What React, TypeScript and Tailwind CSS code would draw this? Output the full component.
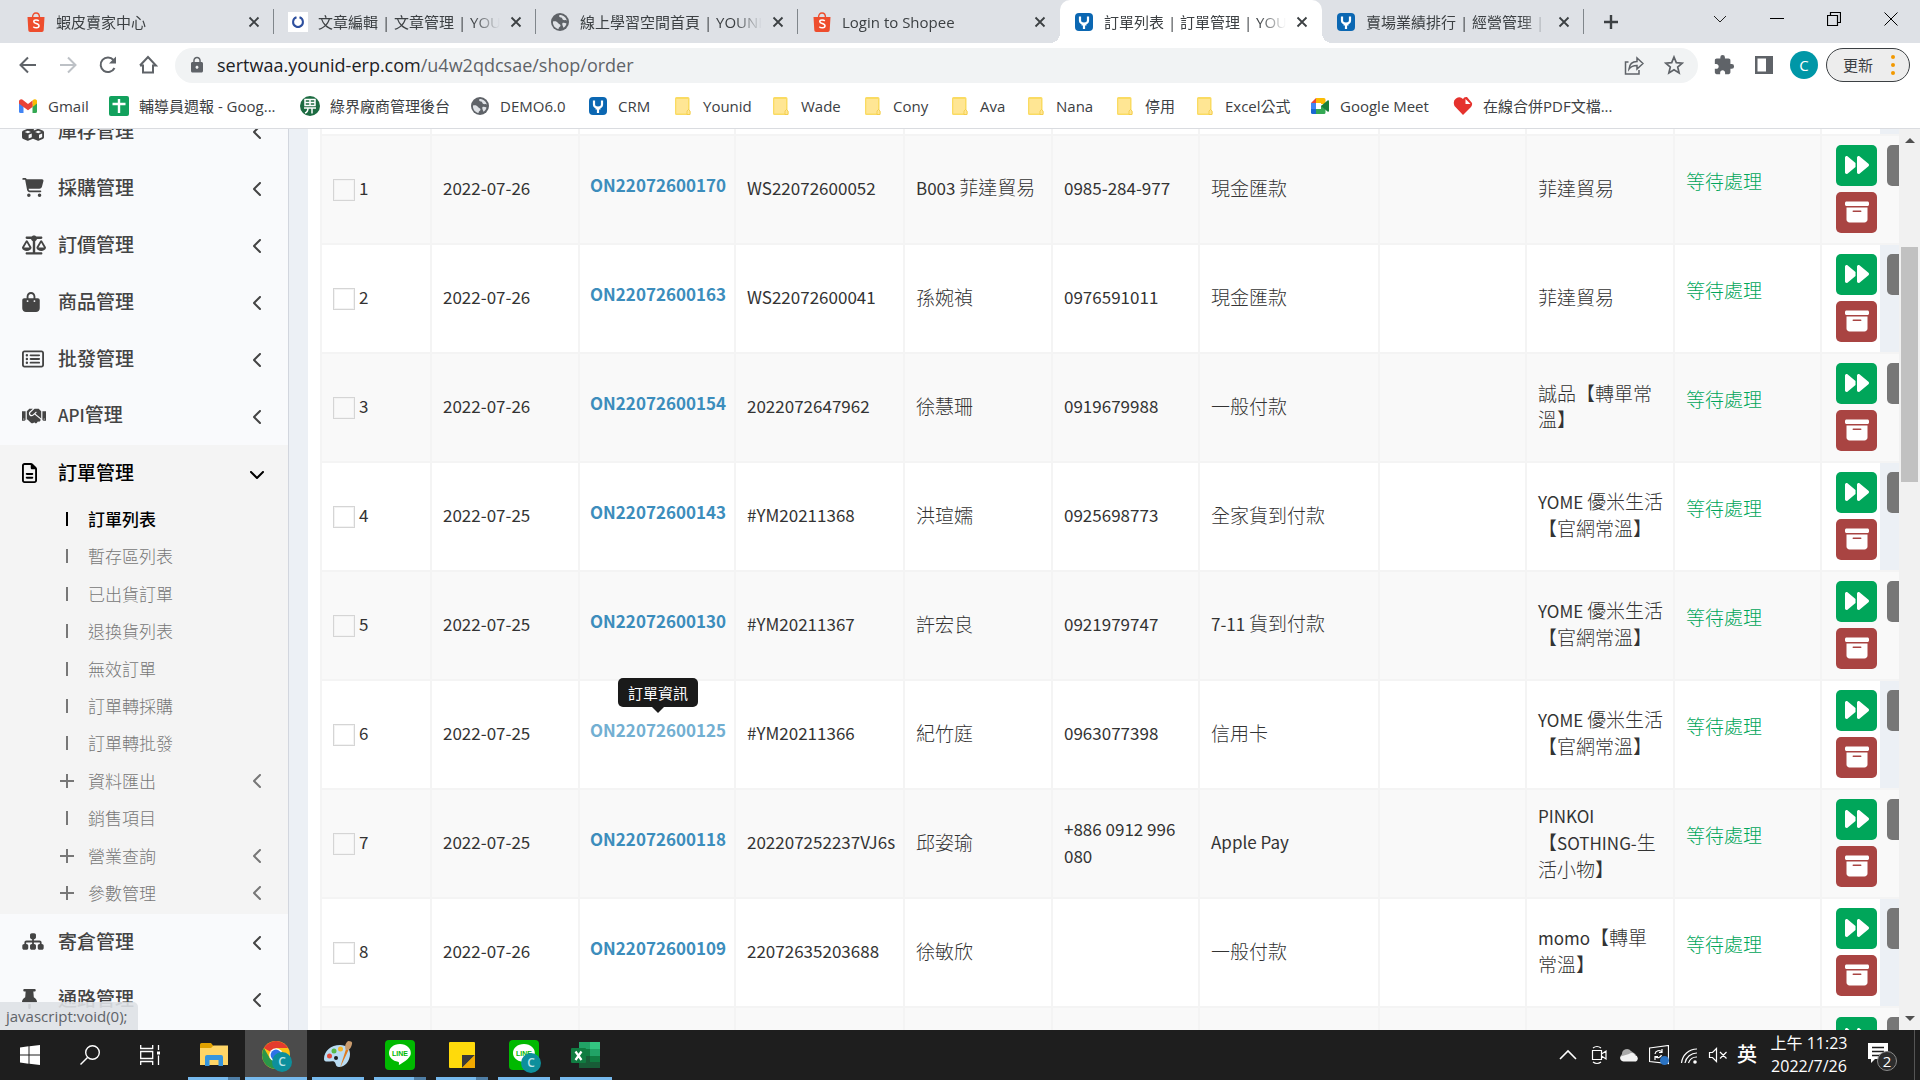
import React from "react";
import {
  FaBagShopping,
  FaBoxArchive,
  FaCartShopping,
  FaChevronDown,
  FaChevronLeft,
  FaCubes,
  FaForward,
  FaRegFileLines,
  FaRegRectangleList,
  FaScaleBalanced,
  FaSitemap,
  FaThumbtack,
} from "react-icons/fa6";
import { FaHandshake } from "react-icons/fa";
import { MdExtension, MdLock } from "react-icons/md";

/* ---------- small drawings ---------- */

const Shopee = () => (
  <svg viewBox="0 0 20 20" className="size-5">
    <path d="M6.500 5.500C6.500 2.500 8 1 10 1s3.500 1.500 3.500 4.500" fill="none" stroke="#ee4d2d" strokeWidth="1.400" />
    <path d="M1.500 5h17l-.8 13.200a1.800 1.800 0 0 1-1.800 1.700H4.100a1.800 1.800 0 0 1-1.800-1.700z" fill="#ee4d2d" />
    <path d="M12.800 8.900c-1-.9-5-1.500-5 .8 0 2.200 5.200 1.400 5.200 4 0 2.700-4.200 2.400-5.700 1" fill="none" stroke="#fff" strokeWidth="1.500" />
  </svg>
);

const RingIcon = () => (
  <svg viewBox="0 0 20 20" className="size-5">
    <rect width="20" height="20" fill="#fff" />
    <path d="M8.500 5.200a5 5 0 0 0-.5 9.300M11.500 5.200a5 5 0 0 1 .5 9.300M8 14.500q2 1 4 0" fill="none" stroke="#2d4f9e" strokeWidth="2" />
  </svg>
);

const GlobeIcon = () => (
  <svg viewBox="0 0 20 20" className="size-5">
    <circle cx="10" cy="10" r="9" fill="#5f6368" />
    <path d="M3 9.500c2.500-.5 4 0 5 1.500s2.500 1 2.500 2.500-2 1.500-2 3.500c-3.500-.5-6-4-5.500-7.500zM9.500 3c-1 1.500 0 2.500 1.500 2.500s1 2 2.500 2.500 2.500-.5 3.300.8C16.300 5.500 13.500 3 9.500 3zM12.500 11c1.500-.5 3 .3 4 .5-.5 2-1.500 3.500-3 4.300-.5-1.500-1.800-3.800-1-4.800z" fill="#dfe2e6" />
  </svg>
);

const YounidIcon = () => (
  <svg viewBox="0 0 20 20" className="size-5">
    <rect x="1" y="1" width="18" height="18" rx="4" fill="#0b67b2" />
    <path d="M6 4.500v4q0 3 4 3t4-3v-4M10 11v6M7.500 12.500h5" fill="none" stroke="#fff" strokeWidth="2.200" />
  </svg>
);

const GmailIcon = () => (
  <svg viewBox="0 0 20 20" className="size-5">
    <path d="M1 5v10.500q0 1.500 1.500 1.500H5.500V8z" fill="#4285f4" />
    <path d="M19 5v10.500q0 1.500-1.500 1.500h-3V8z" fill="#34a853" />
    <path d="M14.500 8V4.500l1.200-.9Q17.500 2.600 19 4.500V7.500L14.500 11z" fill="#fbbc04" />
    <path d="M1 4.800Q2.200 2.600 4.300 3.600L10 8l4.500-3.500V11L10 14.300 5.500 11 1 7.500z" fill="#ea4335" />
  </svg>
);

const SheetIcon = () => (
  <svg viewBox="0 0 20 20" className="size-5">
    <rect width="20" height="20" rx="2" fill="#12a15d" />
    <path d="M10 3v14M3.500 8h13" stroke="#fff" strokeWidth="2.400" />
  </svg>
);

const EcpayIcon = () => (
  <svg viewBox="0 0 20 20" className="size-5">
    <circle cx="10" cy="10" r="10" fill="#1c6b41" />
    <path d="M5 3.500h10v6H5zM5 6.500h10M10 3.500v6M4 12h12M8 12q0 4-3 5M12 12v5.500" fill="none" stroke="#fff" strokeWidth="1.500" />
  </svg>
);

const FolderIcon = () => (
  <svg viewBox="0 0 20 20" className="size-5">
    <path d="M2 2.500Q2 1 3.500 1H15q1.500 0 1.500 1.500V14l1 1.500v2q0 1.500-1.500 1.500H3.500Q2 19 2 17.500z" fill="#fadb62" />
    <path d="M3.300 3H15v14.500H3.300z" fill="#ffe694" />
    <path d="M14 18.500v-3.500l1.500-1.500 1.500 1.500v3.500z" fill="#ffe694" stroke="#f0c53a" strokeWidth=".7" />
  </svg>
);

const MeetIcon = () => (
  <svg viewBox="0 0 20 20" className="size-5">
    <path d="M1 7l5-5v5z" fill="#ea4335" />
    <path d="M6 2h8q1.500 0 1.500 1.500V8H11V7H6z" fill="#fbbc04" />
    <path d="M1 7h5v6.500H1z" fill="#4285f4" />
    <path d="M1 13h5v5H2.500Q1 18 1 16.500z" fill="#1967d2" />
    <path d="M6 13h5v-3l4.500-2v8.500q0 1.500-1.500 1.500H6z" fill="#34a853" />
    <path d="M11 10l6.500-5.500q1.500-.8 1.500 1v9q0 1.800-1.500 1z" fill="#188038" />
  </svg>
);

const PdfHeart = () => (
  <svg viewBox="0 0 20 20" className="size-5">
    <path d="M10 19L1.500 10Q-.5 5 3 2.500 7-.2 10 3q1-2.500 4-2l5 6q.5 2-1 4z" fill="#e5322d" />
    <path d="M12.500 3l5 5h-5z" fill="#fff" />
  </svg>
);

const CloseX = () => (
  <svg viewBox="0 0 12 12" className="size-3">
    <path d="M1.500 1.500l9 9M10.500 1.500l-9 9" stroke="#3c4043" strokeWidth="1.800" />
  </svg>
);

/* ---------- browser chrome ---------- */

const tabs = [
  { icon: <Shopee />, title: "蝦皮賣家中心", sep: true },
  { icon: <RingIcon />, title: "文章編輯 | 文章管理 | YOUNID", sep: true },
  { icon: <GlobeIcon />, title: "線上學習空間首頁 | YOUNID", sep: true },
  { icon: <Shopee />, title: "Login to Shopee", sep: false },
  { icon: <YounidIcon />, title: "訂單列表 | 訂單管理 | YOUNID", sep: false, active: true },
  { icon: <YounidIcon />, title: "賣場業績排行 | 經營管理 | YOUNID", sep: true },
];

function TabStrip() {
  return (
    <div className="flex h-[43px] shrink-0 bg-[#dee1e6] pl-3">
      {tabs.map((t, i) => (
        <div
          key={i}
          className={
            t.active
              ? "relative flex w-[262px] items-center rounded-t-[10px] bg-white pr-2 pl-[14px]"
              : "relative flex w-[262px] items-center pr-2 pl-[14px]"
          }
        >
          {t.active && (
            <>
              <span className="absolute bottom-0 -left-2.5 size-2.5 bg-[radial-gradient(circle_at_0_0,transparent_10px,white_10px)]" />
              <span className="absolute -right-2.5 bottom-0 size-2.5 bg-[radial-gradient(circle_at_100%_0,transparent_10px,white_10px)]" />
            </>
          )}
          {t.icon}
          <span className="mr-1 ml-2.5 flex-1 overflow-hidden text-[15px] leading-6 whitespace-nowrap text-[#3c4043] [mask-image:linear-gradient(to_right,#000_85%,transparent)]">
            {t.title}
          </span>
          <button aria-label="關閉分頁" className="flex size-6 items-center justify-center">
            <CloseX />
          </button>
          {t.sep && <span className="absolute top-[9px] right-0 h-[25px] w-px bg-[#80868b]" />}
        </div>
      ))}
      <button aria-label="新分頁" className="flex w-[54px] items-center justify-center">
        <svg viewBox="0 0 16 16" className="size-4">
          <path d="M8 1v14M1 8h14" stroke="#3c4043" strokeWidth="2.400" />
        </svg>
      </button>
      <div className="mr-px ml-auto flex h-[37px]">
        <button aria-label="搜尋分頁" className="flex w-[57px] items-center justify-center">
          <svg viewBox="0 0 14 14" className="size-3.5">
            <path d="M1 4l6 6 6-6" fill="none" stroke="#222" />
          </svg>
        </button>
        <button aria-label="最小化" className="flex w-[57px] items-center justify-center">
          <span className="h-px w-3.5 bg-black" />
        </button>
        <button aria-label="還原" className="flex w-[57px] items-center justify-center">
          <svg viewBox="0 0 14 14" className="size-3.5">
            <path d="M.5 3.500h10v10H.5zM3.500 3V.5h10v10H11" fill="none" stroke="#000" strokeWidth="1.200" />
          </svg>
        </button>
        <button aria-label="關閉" className="flex w-[57px] items-center justify-center">
          <svg viewBox="0 0 14 14" className="size-3.5">
            <path d="M.5.5l13 13M13.500.5l-13 13" stroke="#000" />
          </svg>
        </button>
      </div>
    </div>
  );
}

function NavIcon({ label, children }: { label: string; children: React.ReactNode }) {
  return (
    <button aria-label={label} className="flex h-8 w-10 items-center justify-center">
      <svg viewBox="0 0 20 20" className="size-5" fill="none" stroke="#5f6368" strokeWidth="2">
        {children}
      </svg>
    </button>
  );
}

function Toolbar() {
  return (
    <div className="flex h-[45px] shrink-0 items-center bg-white pr-2.5 pb-px pl-2">
      <NavIcon label="上一頁">
        <path d="M18 10H3M10 2.500L2.500 10l7.500 7.500" />
      </NavIcon>
      <NavIcon label="下一頁">
        <path d="M2 10h15M10 2.500l7.500 7.500-7.500 7.500" stroke="#bdc1c6" />
      </NavIcon>
      <NavIcon label="重新載入">
        <path d="M16.500 13A7.300 7.300 0 1 1 15.500 5" />
        <path d="M18 1.500V8.500h-7z" fill="#5f6368" stroke="none" />
      </NavIcon>
      <NavIcon label="首頁">
        <path d="M5 9.500V17.500h10V9.500M2 10.500l8-8.500 8 8.500H14.500M2 10.500h3.500" />
      </NavIcon>
      <div className="ml-[7px] flex h-[35px] flex-1 items-center rounded-full bg-[#f1f3f4] pr-3 pl-[13px]">
        <MdLock className="size-[18px] text-[#5f6368]" />
        <label htmlFor="url" className="sr-only">
          網址
        </label>
        <div className="relative ml-[11px] flex-1">
          <input id="url" readOnly value="sertwaa.younid-erp.com/u4w2qdcsae/shop/order" className="w-full bg-transparent text-[18px] leading-7 text-transparent outline-none" />
          <span aria-hidden="true" className="pointer-events-none absolute inset-0 text-[18px] leading-7 text-[#5f6368]">
            <span className="text-[#202124]">sertwaa.younid-erp.com</span>/u4w2qdcsae/shop/order
          </span>
        </div>
        <button aria-label="分享" className="mr-2 flex w-10 justify-center">
          <svg viewBox="0 0 20 20" className="size-5" fill="none" stroke="#5f6368" strokeWidth="1.500">
            <path d="M4.500 7H1.500v12H15v-4M5 14c.5-5 3.500-7.500 8-7.500V3l6 5.500-6 5.500v-3.500c-3.500 0-6 .8-8 3.500z" />
          </svg>
        </button>
        <button aria-label="加入書籤" className="flex w-6 justify-center">
          <svg viewBox="0 0 20 20" className="size-5" fill="none" stroke="#5f6368" strokeWidth="1.700">
            <path d="M10 2l2.300 5.600 6 .5-4.600 3.900 1.400 5.900L10 14.700l-5.100 3.200 1.400-5.900L1.700 8.100l6-.5z" />
          </svg>
        </button>
      </div>
      <button aria-label="擴充功能" className="ml-1.5 flex w-10 justify-center">
        <MdExtension className="size-[22px] text-[#5f6368]" />
      </button>
      <button aria-label="側邊面板" className="flex w-10 justify-center">
        <svg viewBox="0 0 20 20" className="size-5">
          <path d="M1 1h18v18H1zM3.500 3.500v13H12v-13z" fill="#5f6368" fillRule="evenodd" />
        </svg>
      </button>
      <button className="ml-1.5 size-7 rounded-full bg-[#0097a7] text-[15px] text-white">C</button>
      <button className="ml-2 flex h-[34px] w-[84px] items-center rounded-full border border-[#3c4043] bg-[#ededed] pl-4 text-[15px] text-[#3c4043]">
        更新
        <span className="ml-[18px] flex flex-col gap-1">
          <span className="size-1 rounded-full bg-[#f29900]" />
          <span className="size-1 rounded-full bg-[#f29900]" />
          <span className="size-1 rounded-full bg-[#f29900]" />
        </span>
      </button>
    </div>
  );
}

const bookmarks = [
  { icon: <GmailIcon />, label: "Gmail", w: "w-[91px]" },
  { icon: <SheetIcon />, label: "輔導員週報 - Goog...", w: "w-[191px]" },
  { icon: <EcpayIcon />, label: "綠界廠商管理後台", w: "w-[170px]" },
  { icon: <GlobeIcon />, label: "DEMO6.0", w: "w-[118px]" },
  { icon: <YounidIcon />, label: "CRM", w: "w-[85px]" },
  { icon: <FolderIcon />, label: "Younid", w: "w-[98px]" },
  { icon: <FolderIcon />, label: "Wade", w: "w-[92px]" },
  { icon: <FolderIcon />, label: "Cony", w: "w-[87px]" },
  { icon: <FolderIcon />, label: "Ava", w: "w-[76px]" },
  { icon: <FolderIcon />, label: "Nana", w: "w-[89px]" },
  { icon: <FolderIcon />, label: "停用", w: "w-[80px]" },
  { icon: <FolderIcon />, label: "Excel公式", w: "w-[115px]" },
  { icon: <MeetIcon />, label: "Google Meet", w: "w-[143px]" },
  { icon: <PdfHeart />, label: "在線合併PDF文檔...", w: "w-[170px]" },
];

function Bookmarks() {
  return (
    <div className="flex h-[41px] shrink-0 items-center border-b border-[#dadce0] bg-white pb-1 pl-[18px]">
      {bookmarks.map((b) => (
        <div key={b.label} className={b.w}>
          <a href="#" className="flex items-center gap-2.5 text-[15px] leading-6 whitespace-nowrap text-[#3c4043]">
            {b.icon}
            <span>{b.label}</span>
          </a>
        </div>
      ))}
    </div>
  );
}

/* ---------- sidebar ---------- */

/* Latin runs are set one step smaller and heavier than the Chinese ones so both read as one size. */
function Mixed({ text, latin = "text-[17px] font-normal" }: { text: string; latin?: string }) {
  return (
    <>
      {text.split(/([\x20-\x7e]+)/).map((part, i) =>
        /^[\x20-\x7e]+$/.test(part) ? (
          <span key={i} className={latin}>
            {part}
          </span>
        ) : (
          part
        ),
      )}
    </>
  );
}

const subItems = [
  { label: "訂單列表", active: true },
  { label: "暫存區列表" },
  { label: "已出貨訂單" },
  { label: "退換貨列表" },
  { label: "無效訂單" },
  { label: "訂單轉採購" },
  { label: "訂單轉批發" },
  { label: "資料匯出", more: true },
  { label: "銷售項目" },
  { label: "營業查詢", more: true },
  { label: "參數管理", more: true },
];

function MenuItem({ icon, label, open }: { icon: React.ReactNode; label: string; open?: boolean }) {
  return (
    <a
      href="#"
      className={
        open
          ? "flex h-[57px] items-center pr-[23px] pl-[22px] text-[19px] font-medium text-black"
          : "flex h-[57px] items-center pr-[25px] pl-[22px] text-[19px] font-medium text-[#444]"
      }
    >
      <span className="w-9 pb-0.5">{icon}</span>
      <span className="flex-1 pb-1 leading-7">
        <Mixed text={label} latin="text-[17px]" />
      </span>
      {open ? <FaChevronDown className="size-4" /> : <FaChevronLeft className="h-4 w-2.5" />}
    </a>
  );
}

function Sidebar() {
  return (
    <aside className="w-[289px] shrink-0 overflow-hidden border-r border-[#d2d6de] bg-[#f9fafc]">
      <nav className="-mt-[26px]">
        <MenuItem icon={<FaCubes className="size-[22px]" />} label="庫存管理" />
        <MenuItem icon={<FaCartShopping className="h-[19px] w-[22px]" />} label="採購管理" />
        <MenuItem icon={<FaScaleBalanced className="h-5 w-6" />} label="訂價管理" />
        <MenuItem icon={<FaBagShopping className="h-5 w-[18px]" />} label="商品管理" />
        <MenuItem icon={<FaRegRectangleList className="size-[22px]" />} label="批發管理" />
        <MenuItem icon={<FaHandshake className="size-6" />} label="API管理" />
        <div className="bg-[#f4f4f4]">
          <MenuItem open icon={<FaRegFileLines className="h-5 w-[15px]" />} label="訂單管理" />
          <ul className="grid h-[412px] auto-rows-fr">
            {subItems.map((s) => (
              <li key={s.label} className="flex items-center pb-1">
                <a
                  href="#"
                  className={
                    s.active
                      ? "flex flex-1 items-center pr-[25px] pl-[60px] text-[17px] font-medium text-black"
                      : "flex flex-1 items-center pr-[25px] pl-[60px] text-[17px] font-light text-[#777]"
                  }
                >
                  <svg viewBox="0 0 14 14" className="mr-3.5 size-3.5" stroke="currentColor" strokeWidth="2" fill="none">
                    <path d={s.more ? "M7 0v14M0 7h14" : "M7 0v14"} />
                  </svg>
                  <span className="flex-1 leading-7">{s.label}</span>
                  {s.more && <FaChevronLeft className="h-4 w-2.5" />}
                </a>
              </li>
            ))}
          </ul>
        </div>
        <MenuItem icon={<FaSitemap className="h-[19px] w-[22px]" />} label="寄倉管理" />
        <MenuItem icon={<FaThumbtack className="h-5 w-[15px]" />} label="通路管理" />
      </nav>
    </aside>
  );
}

/* ---------- order table ---------- */

const orders = [
  ["2022-07-26", "ON22072600170", "WS22072600052", "B003 菲達貿易", "0985-284-977", "現金匯款", "菲達貿易"],
  ["2022-07-26", "ON22072600163", "WS22072600041", "孫婉禎", "0976591011", "現金匯款", "菲達貿易"],
  ["2022-07-26", "ON22072600154", "2022072647962", "徐慧珊", "0919679988", "一般付款", "誠品【轉單常溫】"],
  ["2022-07-25", "ON22072600143", "#YM20211368", "洪瑄嬬", "0925698773", "全家貨到付款", "YOME 優米生活【官網常溫】"],
  ["2022-07-25", "ON22072600130", "#YM20211367", "許宏良", "0921979747", "7-11 貨到付款", "YOME 優米生活【官網常溫】"],
  ["2022-07-25", "ON22072600125", "#YM20211366", "紀竹庭", "0963077398", "信用卡", "YOME 優米生活【官網常溫】"],
  ["2022-07-25", "ON22072600118", "202207252237VJ6s", "邱姿瑜", "+886 0912 996 080", "Apple Pay", "PINKOI【SOTHING-生活小物】"],
  ["2022-07-26", "ON22072600109", "22072635203688", "徐敏欣", "", "一般付款", "momo【轉單常溫】"],
  ["2022-07-26", "ON22072600092", "22072635203671", "", "", "", ""],
];

const cell = "border-t-2 border-l-2 border-[#f4f4f4] pt-0 pr-[9px] pb-1 pl-[11px] align-middle leading-[26px]";

function OrderRow({ data, n }: { data: string[]; n: number }) {
  const [date, no, ext, name, phone, pay, shop] = data;
  const hovered = n === 6;
  return (
    <tr className={n % 2 ? "h-[109px] bg-[#f9f9f9]" : "h-[109px]"}>
      <td className={cell}>
        <label className="flex items-center gap-1 text-[17px] font-normal">
          <input type="checkbox" className="mt-1 size-[22px] appearance-none border border-[#d5d5d5] shadow-[inset_0_0_0_1px_#f3f3f3]" />
          {n}
        </label>
      </td>
      <td className={cell}>
        <Mixed text={date} />
      </td>
      <td className="border-t-2 border-l-2 border-[#f4f4f4] pb-1 pl-2.5 align-middle leading-[26px]">
        <div className="relative w-max pb-1.5 text-[17px] whitespace-nowrap">
          <a href="#" className={hovered ? "font-bold text-[#72afd2]" : "font-bold text-[#3c8dbc]"}>
            {no}
          </a>
          {hovered && (
            <div role="tooltip" className="absolute bottom-full left-1/2 mb-2.5 -translate-x-1/2 rounded-[5px] bg-[#1a1a1a] px-2.5 text-[15px] leading-[29px] font-normal text-white">
              訂單資訊
              <span className="absolute top-full left-1/2 -ml-1.5 border-x-6 border-t-6 border-x-transparent border-t-[#1a1a1a]" />
            </div>
          )}
        </div>
      </td>
      <td className={cell}>
        <Mixed text={ext} />
      </td>
      <td className={cell}>
        <Mixed text={name} />
      </td>
      <td className={cell}>
        <Mixed text={phone} />
      </td>
      <td className={cell}>
        <Mixed text={pay} />
      </td>
      <td className={cell} />
      <td className={cell}>
        <Mixed text={shop} />
      </td>
      <td className={cell}>
        <div className="pb-3.5 text-[#00a65a]">等待處理</div>
      </td>
      <td className="border-t-2 border-l-2 border-[#f4f4f4] pb-0.5 pl-[14px]">
        <div className="grid w-max grid-cols-2 gap-x-2.5 gap-y-1.5">
          <button aria-label="下一步" className="flex size-[41px] items-center justify-center rounded-[5px] bg-[#00a65a] text-white">
            <FaForward className="size-6" />
          </button>
          <button aria-label="更多" className="size-[41px] rounded-[5px] bg-[#777]" />
          <button aria-label="封存" className="flex size-[41px] items-center justify-center rounded-[5px] bg-[#a94442] text-white">
            <FaBoxArchive className="size-6" />
          </button>
        </div>
      </td>
    </tr>
  );
}

function OrderTable() {
  return (
    <main className="flex-1 overflow-hidden bg-[#ecf0f5] pr-[19px] pl-[19px]">
      <div className="h-full bg-white px-3">
        <table className="w-[calc(100%+62px)] table-fixed border-separate border-spacing-0 text-[19px] font-light text-[#333]">
          <colgroup>
            <col className="w-[110px]" />
            <col className="w-[148px]" />
            <col className="w-[156px]" />
            <col className="w-[169px]" />
            <col className="w-[148px]" />
            <col className="w-[147px]" />
            <col />
            <col className="w-[147px]" />
            <col className="w-[148px]" />
            <col className="w-[147px]" />
            <col className="w-[110px]" />
          </colgroup>
          <thead>
            <tr className="h-[5px]">
              {Array.from({ length: 11 }, (_, i) => (
                <td key={i} className="border-l-2 border-[#f4f4f4] p-0" />
              ))}
            </tr>
          </thead>
          <tbody>
            {orders.map((o, i) => (
              <OrderRow key={o[1]} data={o} n={i + 1} />
            ))}
          </tbody>
        </table>
      </div>
    </main>
  );
}

function ScrollBar() {
  return (
    <div className="flex w-[21px] shrink-0 flex-col items-center bg-[#f1f1f1] py-[9px]">
      <span className="border-x-5 border-b-5 border-x-transparent border-b-[#505050]" />
      <span className="mt-[104px] h-[235px] w-[17px] bg-[#c1c1c1]" />
      <span className="mt-auto border-x-5 border-t-5 border-x-transparent border-t-[#505050]" />
    </div>
  );
}

/* ---------- taskbar ---------- */

const LineLogo = () => (
  <svg viewBox="0 0 30 30" className="size-[30px]">
    <rect width="30" height="30" rx="4" fill="#00b900" />
    <path d="M15 4C8.400 4 4 8 4 13c0 4.500 3.800 8 9 8.800 1.500.3 1 1.500.8 3.200 4-2 11.200-6.500 12-11C26.500 8.500 21.600 4 15 4z" fill="#fff" />
    <text x="15" y="16" textAnchor="middle" fontSize="7" fontWeight="bold" fill="#00b900" fontFamily="Liberation Sans">
      LINE
    </text>
  </svg>
);

const Badge = () => (
  <span className="absolute -right-0.5 -bottom-[3px] size-5 rounded-full bg-[#0d8f9c] text-center text-xs leading-5 font-semibold text-[#b9e4e8]">C</span>
);

const ChromeLogo = () => (
  <svg viewBox="0 0 28 28" className="size-7">
    <circle cx="14" cy="14" r="14" fill="#fbc116" />
    <path d="M14 14L1.900 7A14 14 0 0 1 26.100 7H14z" fill="#e33b2e" />
    <path d="M1.900 7A14 14 0 0 0 14 28l6-10.500L14 14l-6 3.500z" fill="#2a9649" />
    <circle cx="14" cy="14" r="6.800" fill="#fff" />
    <circle cx="14" cy="14" r="5.400" fill="#2f72e8" />
  </svg>
);

const ExplorerLogo = () => (
  <svg viewBox="0 0 28 24" className="h-6 w-7">
    <path d="M0 1.500Q0 0 1.500 0H11l2.500 3H28v19H0z" fill="#e0a100" />
    <path d="M0 5h11l2.500-2.500H28V22H0z" fill="#ffd566" />
    <path d="M5 14q0-2 2-2h14q2 0 2 2v9h-4.500v-6h-9v6H5z" fill="#3695dd" />
  </svg>
);

const PaintLogo = () => (
  <svg viewBox="0 0 30 28" className="h-7 w-[30px]">
    <path d="M1 18C1 10 8 4 17 4c7 0 10 4 10 9 0 7-5 13-11 13-4 0-2.500-4-5-5.500S1 23 1 18z" fill="#b9dcf3" />
    <circle cx="6.500" cy="15" r="2.500" fill="#e24a3b" />
    <circle cx="11" cy="10" r="2.500" fill="#58b947" />
    <circle cx="17.500" cy="8" r="2.500" fill="#f4b62e" />
    <circle cx="13" cy="17" r="2" fill="#1e1e1e" />
    <path d="M17 27l6-19 2.500 1z" fill="#e07b1f" />
    <path d="M22.500 8.500Q21 3 25 0q5 0 4 3-1 5-4 6z" fill="#c99b6d" />
  </svg>
);

const StickyLogo = () => (
  <svg viewBox="0 0 26 26" className="size-[26px]">
    <rect width="26" height="26" rx="1" fill="#ffda0b" />
    <path d="M13 13h13L13 26z" fill="#3b3a39" />
    <path d="M26 13v13H13z" fill="#f2a900" />
  </svg>
);

const ExcelLogo = () => (
  <svg viewBox="0 0 30 28" className="h-7 w-[30px]">
    <path d="M8 1h11v7H8z" fill="#21a366" />
    <path d="M19 1h10v7H19z" fill="#33c481" />
    <path d="M8 8h11v7H8z" fill="#107c41" />
    <path d="M19 8h10v7H19z" fill="#21a366" />
    <path d="M8 15h11v12H8z" fill="#185c37" />
    <path d="M19 15h10v6H19z" fill="#107c41" />
    <path d="M19 21h10v6H19z" fill="#185c37" />
    <rect y="7" width="15" height="15" rx="1" fill="#107c41" />
    <path d="M4.500 10.500l6 8.500M10.500 10.500l-6 8.500" stroke="#fff" strokeWidth="2.200" />
  </svg>
);

const apps = [
  { name: "檔案總管", icon: <ExplorerLogo />, stacked: true },
  { name: "Chrome", icon: <ChromeLogo />, active: true, badge: true },
  { name: "小畫家", icon: <PaintLogo /> },
  { name: "LINE", icon: <LineLogo />, stacked: true },
  { name: "自黏便箋", icon: <StickyLogo />, stacked: true },
  { name: "LINE 擴充功能", icon: <LineLogo />, badge: true },
  { name: "Excel", icon: <ExcelLogo /> },
];

function TrayIcon({ label, w, children }: { label: string; w: string; children: React.ReactNode }) {
  return (
    <button aria-label={label} className={w}>
      <svg viewBox="0 0 20 20" className="mx-auto size-5" fill="none" stroke="#fff" strokeWidth="1.200">
        {children}
      </svg>
    </button>
  );
}

function Taskbar() {
  return (
    <footer className="flex h-[50px] shrink-0 items-stretch bg-[#1e1e1e] text-white">
      <button aria-label="開始" className="flex w-[60px] items-center justify-center">
        <svg viewBox="0 0 20 20" className="size-5" fill="#fff">
          <path d="M0 2.500l8.500-1.200v8.200H0zM9.500 1.200L20 0v9.500H9.500zM0 10.500h8.500v8.200L0 17.500zM9.500 10.500H20V20L9.500 18.800z" />
        </svg>
      </button>
      <button aria-label="搜尋" className="flex w-[60px] items-center justify-center">
        <svg viewBox="0 0 20 20" className="size-5" fill="none" stroke="#fff" strokeWidth="1.400">
          <circle cx="12.500" cy="7.500" r="6.800" />
          <path d="M7.500 12.500L.5 19.500" />
        </svg>
      </button>
      <button aria-label="工作檢視" className="mr-[3px] flex w-[60px] items-center justify-center">
        <svg viewBox="0 0 20 20" className="size-5" fill="none" stroke="#fff" strokeWidth="1.300">
          <path d="M.7 0v3.500h12V0M.7 6.500h12v7H.7zM.7 20v-3.500h12V20M18.500 0v5M18.500 10.500V20" />
          <path d="M17 6.500h3v3h-3z" fill="#fff" stroke="none" />
        </svg>
      </button>
      {apps.map((a) => (
        <button
          key={a.name}
          aria-label={a.name}
          className={
            a.active
              ? "relative flex w-[62px] items-center justify-center bg-[#4b4b4b]"
              : "relative flex w-[62px] items-center justify-center"
          }
        >
          <span className="relative">
            {a.icon}
            {a.badge && <Badge />}
          </span>
          <span className={a.active ? "absolute inset-x-0 bottom-0 flex h-[3px] bg-[#76b9ed]" : "absolute inset-x-[5px] bottom-0 flex h-[3px] bg-[#76b9ed]"}>
            {a.stacked && <span className="ml-auto w-3 bg-[#4f7ea5]" />}
          </span>
        </button>
      ))}
      <div className="ml-auto flex items-center">
        <TrayIcon label="顯示隱藏的圖示" w="w-8">
          <path d="M2 14l8-8 8 8" strokeWidth="1.600" />
        </TrayIcon>
        <TrayIcon label="立即開會" w="w-[30px]">
          <path d="M3.500 5.500h9v9h-9zM12.500 9l4.500-3v8l-4.500-3M4 3q4-3 8 0M4 17q4 3 8 0" />
        </TrayIcon>
        <TrayIcon label="OneDrive" w="w-[30px]">
          <path d="M3 9a5 5 0 0 1 9-3l5 3.500L5 16A4 4 0 0 1 3 9z" fill="#a9a9a9" stroke="none" />
          <path d="M4.500 16.500a3.500 3.500 0 0 1-3-5L10 9a4 4 0 0 1 6 1 3.500 3.500 0 0 1 1 6.500z" fill="#f2f2f2" stroke="none" />
        </TrayIcon>
        <TrayIcon label="更新" w="w-[30px]">
          <path d="M.5 3l19-2.500v18L.5 16.500z" />
          <path d="M6 9a4 4 0 0 1 7-2M13 4v3.500h-3M12.500 10a4 4 0 0 1-6 2M6 15v-3.500h3" />
          <circle cx="15.500" cy="15.500" r="4.500" fill="#2b73c2" stroke="none" />
        </TrayIcon>
        <TrayIcon label="網路" w="w-[30px]">
          <path d="M2.500 18A15.500 15.500 0 0 1 18 4M6 18A12 12 0 0 1 18 8M9.500 18A8.500 8.500 0 0 1 18 12" />
          <circle cx="16" cy="17" r="1.800" fill="#fff" stroke="none" />
        </TrayIcon>
        <TrayIcon label="音量" w="w-7">
          <path d="M1.500 7.500h3l4-4v13l-4-4h-3zM12 7l6.500 6.500M18.500 7L12 13.500" />
        </TrayIcon>
        <span className="w-[30px] text-center text-[20px] font-medium">英</span>
        <div className="w-[94px] text-center text-[16px] leading-[23px]">
          <div>上午 11:23</div>
          <div>2022/7/26</div>
        </div>
        <button aria-label="通知" className="relative h-8 w-[52px]">
          <svg viewBox="0 0 32 32" className="mx-auto size-8">
            <path d="M2 4h20v16H9l-4 4v-4H2z" fill="#fff" />
            <path d="M6 8.500h12M6 12.500h12M6 16.500h8" stroke="#1e1e1e" strokeWidth="1.300" />
            <circle cx="21" cy="22" r="9.500" fill="#2d2d2d" stroke="#8a8a8a" />
            <text x="21" y="27.500" textAnchor="middle" fontSize="15" fill="#fff">
              2
            </text>
          </svg>
        </button>
        <span className="mr-[5px] ml-1.5 h-[50px] w-px bg-[#555]" />
      </div>
    </footer>
  );
}

export default function App() {
  return (
    <div className="flex h-screen flex-col overflow-hidden bg-white font-['Open_Sans','Noto_Sans_CJK_TC',sans-serif]">
      <TabStrip />
      <Toolbar />
      <Bookmarks />
      <div className="relative flex min-h-0 flex-1 font-['Noto_Sans_CJK_TC',sans-serif]">
        <Sidebar />
        <OrderTable />
        <ScrollBar />
        <div className="absolute bottom-0 left-0 h-7 w-[138px] rounded-tr-[5px] bg-[#dee1e6]/90 pl-1.5 font-['Open_Sans',sans-serif] text-[15px] leading-[29px] text-[#5f6368]">
          javascript:void(0);
        </div>
      </div>
      <Taskbar />
    </div>
  );
}
